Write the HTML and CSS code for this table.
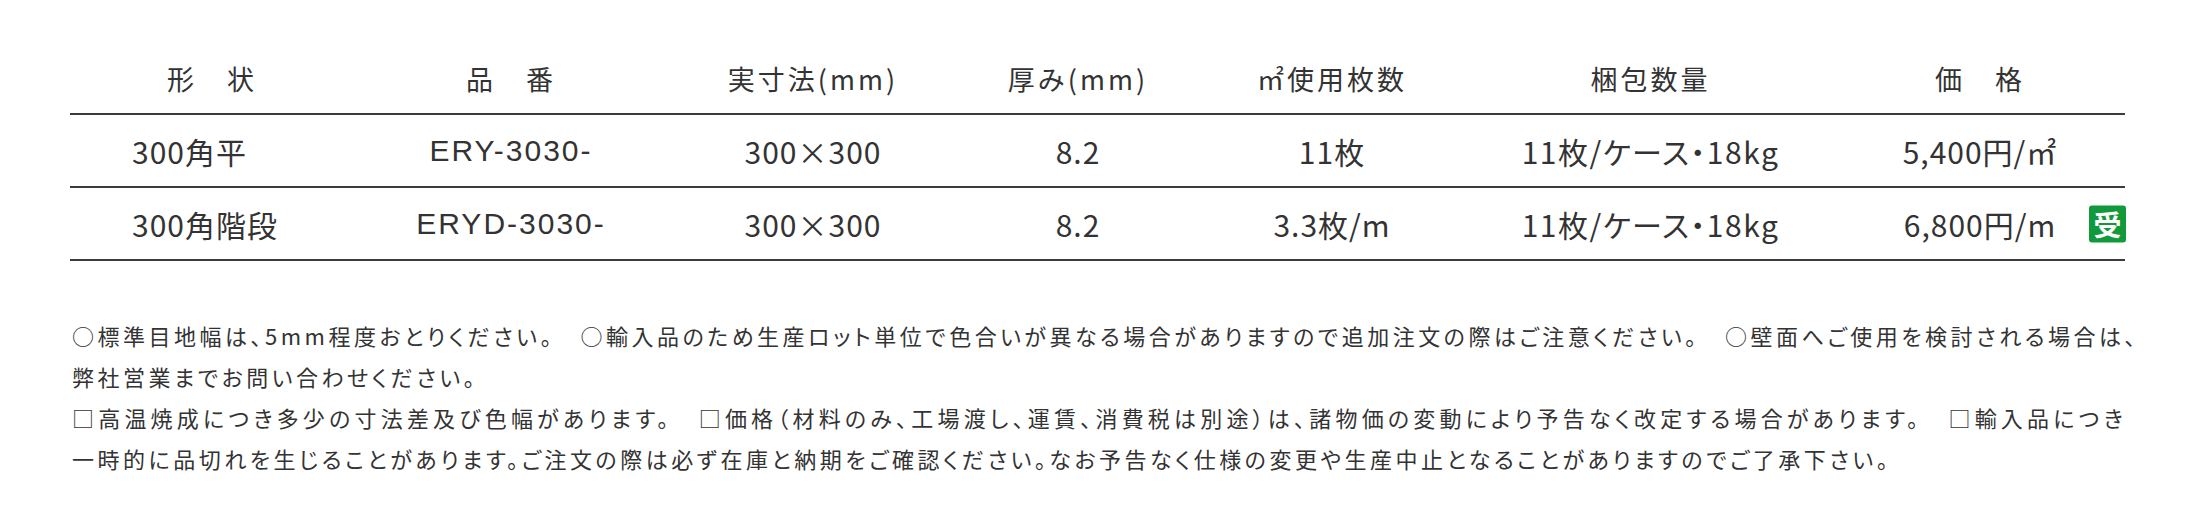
FILE: index.html
```html
<!DOCTYPE html>
<html lang="ja">
<head>
<meta charset="utf-8">
<title>仕様</title>
<link rel="stylesheet" href="styles.css">
</head>
<body>
<main class="page">
  <table class="spec">
    <colgroup>
      <col class="c1"><col class="c2"><col class="c3"><col class="c4"><col class="c5"><col class="c6"><col class="c7">
    </colgroup>
    <thead>
      <tr>
        <th>形　状</th>
        <th>品　番</th>
        <th>実寸法(mm)</th>
        <th>厚み(mm)</th>
        <th>㎡使用枚数</th>
        <th>梱包数量</th>
        <th>価　格</th>
      </tr>
    </thead>
    <tbody>
      <tr>
        <td class="shape">300角平</td>
        <td class="code">ERY-3030-</td>
        <td>300×300</td>
        <td>8.2</td>
        <td>11枚</td>
        <td class="pack">11枚/ケース・18kg</td>
        <td class="price">5,400円/㎡</td>
      </tr>
      <tr>
        <td class="shape">300角階段</td>
        <td class="code">ERYD-3030-</td>
        <td>300×300</td>
        <td>8.2</td>
        <td>3.3枚/m</td>
        <td class="pack">11枚/ケース・18kg</td>
        <td class="price">6,800円/m<span class="badge">受</span></td>
      </tr>
    </tbody>
  </table>
  <div class="notes">
    <p class="note-circle">○標準目地幅は、5mm程度おとりください。　○輸入品のため生産ロット単位で色合いが異なる場合がありますので追加注文の際はご注意ください。　○壁面へご使用を検討される場合は、<br>弊社営業までお問い合わせください。</p>
    <p class="note-square">□高温焼成につき多少の寸法差及び色幅があります。　□価格（材料のみ、工場渡し、運賃、消費税は別途）は、諸物価の変動により予告なく改定する場合があります。　□輸入品につき<br>一時的に品切れを生じることがあります。ご注文の際は必ず在庫と納期をご確認ください。なお予告なく仕様の変更や生産中止となることがありますのでご了承下さい。</p>
  </div>
</main>
</body>
</html>
```

FILE: styles.css
```css
html, body {
  margin: 0;
  padding: 0;
  background: #ffffff;
}

body {
  font-family: "Noto Sans CJK JP", sans-serif;
  color: #333333;
}

.page {
  padding: 43px 0 0 70px;
}

.spec {
  width: 2055px;
  border-collapse: collapse;
  table-layout: fixed;
}

.c1 { width: 284px; }
.c2 { width: 314px; }
.c3 { width: 290px; }
.c4 { width: 240px; }
.c5 { width: 268px; }
.c6 { width: 369px; }
.c7 { width: 290px; }

.spec th {
  height: 70px;
  padding: 0;
  font-size: 27px;
  font-weight: 400;
  letter-spacing: 3px;
  text-align: center;
  vertical-align: middle;
  border-bottom: 2px solid #3c3c3c;
  line-height: 1;
}

.spec td {
  height: 71px;
  padding: 0;
  font-size: 30px;
  letter-spacing: 1px;
  text-align: center;
  vertical-align: middle;
  border-bottom: 2px solid #3c3c3c;
  line-height: 1;
  white-space: nowrap;
}

.spec td.shape {
  text-align: left;
  padding-left: 62px;
}

.spec td.code {
  font-family: "Liberation Sans", "Noto Sans CJK JP", sans-serif;
  letter-spacing: 2px;
}

.spec td.pack {
  font-feature-settings: "palt";
  letter-spacing: 1.5px;
}

.spec td.price {
  position: relative;
}

.badge {
  position: absolute;
  right: -1px;
  top: 50%;
  transform: translateY(-50%);
  width: 37px;
  height: 37px;
  background: #12993c;
  border-radius: 3px;
  color: #ffffff;
  font-size: 28px;
  font-weight: 700;
  line-height: 37px;
  letter-spacing: 0;
  text-align: center;
}

.notes {
  margin-top: 54px;
  padding-left: 2px;
  font-size: 22px;
  letter-spacing: 3.5px;
  font-feature-settings: "palt";
  line-height: 41px;
  white-space: nowrap;
}

.notes p {
  margin: 0;
}

.notes .note-square::first-line {
  letter-spacing: 4.2px;
}
```
